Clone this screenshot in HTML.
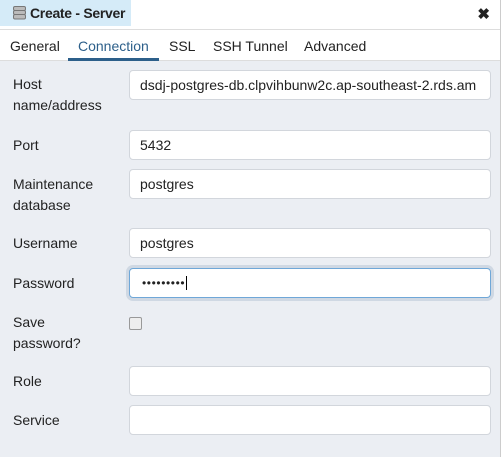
<!DOCTYPE html>
<html><head><style>
*{box-sizing:border-box;margin:0;padding:0}
body{width:503px;height:457px;overflow:hidden;background:#ebeef3;font-family:"Liberation Sans",sans-serif;font-size:14px;color:#222;position:relative}
.title{position:absolute;left:0;top:0;width:503px;height:29px;background:#fff}
.tl{position:absolute;left:0;top:0;width:131px;height:26px;background:#d5ebf8}
.tl span{position:absolute;left:30px;top:5px;font-size:14px;font-weight:bold;color:#222;letter-spacing:-0.3px}
.ic{position:absolute;left:13px;top:6px;width:13px;height:14px}
.x{position:absolute;right:13px;top:5px;font-size:15px;font-weight:bold}
.tabs{position:absolute;left:0;top:29px;width:500px;height:32px;background:#fff;border-top:1px solid #ddd;border-bottom:1px solid #ddd}
.tab{position:absolute;top:8px;font-size:14px;color:#222}
.act{color:#2c5f8a}
.ul{position:absolute;left:68px;top:28px;width:91px;height:3px;background:#2c5f8a}
.lbl{position:absolute;left:13px;line-height:21px}
.in{position:absolute;left:129px;width:362px;height:30px;background:#fff;border:1px solid #d2d6dc;border-radius:4px;padding-left:10px;line-height:28px}
.foc{border:1px solid #6fa7d8;box-shadow:0 0 0 3px #cfd8e3}
.cb{position:absolute;left:129px;top:317px;width:13px;height:13px;border:1px solid #999;border-radius:2px;background:#eee}
.rb{position:absolute;left:500px;top:0;width:3px;height:457px;background:#fff;border-left:1px solid #ccc}
</style></head><body>
<div class="title"><div class="tl">
<svg class="ic" viewBox="0 0 13 14"><rect x="0.5" y="0.5" width="12" height="4" rx="1.5" fill="#bbb" stroke="#777"/><rect x="0.5" y="4.5" width="12" height="4" rx="1.5" fill="#bbb" stroke="#777"/><rect x="0.5" y="8.5" width="12" height="4.5" rx="1.5" fill="#bbb" stroke="#777"/></svg>
<span>Create - Server</span></div><div class="x">✖</div></div>
<div class="tabs">
<div class="tab" style="left:10px">General</div>
<div class="tab act" style="left:78px">Connection</div>
<div class="tab" style="left:169px">SSL</div>
<div class="tab" style="left:213px">SSH Tunnel</div>
<div class="tab" style="left:304px">Advanced</div>
<div class="ul"></div></div>
<div class="rb"></div>
<div class="lbl" style="top:74px">Host<br>name/address</div>
<div class="in" style="top:70px">dsdj-postgres-db.clpvihbunw2c.ap-southeast-2.rds.am</div>
<div class="lbl" style="top:135px">Port</div>
<div class="in" style="top:130px">5432</div>
<div class="lbl" style="top:174px">Maintenance<br>database</div>
<div class="in" style="top:169px">postgres</div>
<div class="lbl" style="top:233px">Username</div>
<div class="in" style="top:228px">postgres</div>
<div class="lbl" style="top:273px">Password</div>
<div class="in foc" style="top:268px;font-size:12px;letter-spacing:0.6px;padding-left:12px">•••••••••<span style="border-left:1px solid #000;margin-left:1px"></span></div>
<div class="lbl" style="top:312px">Save<br>password?</div>
<div class="cb"></div>
<div class="lbl" style="top:371px">Role</div>
<div class="in" style="top:366px"></div>
<div class="lbl" style="top:410px">Service</div>
<div class="in" style="top:405px"></div>
</body></html>
